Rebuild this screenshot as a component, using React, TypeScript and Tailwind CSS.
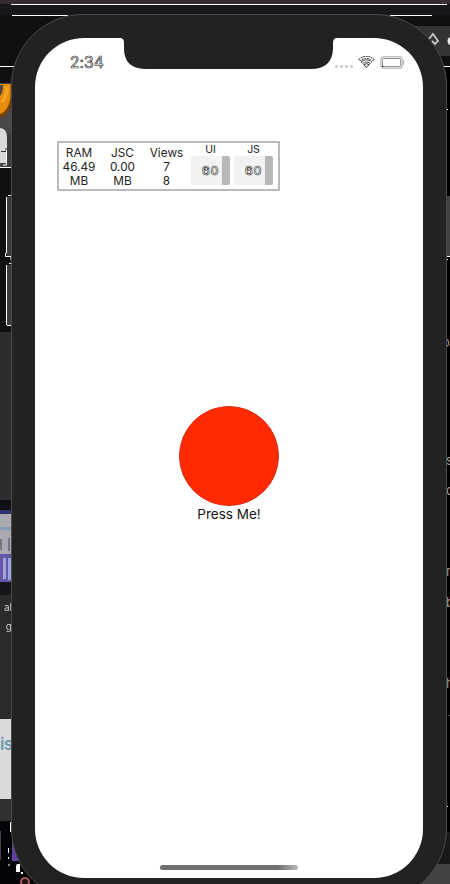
import React from "react";

const stats = [
  { lines: ["RAM", "46.49", "MB"], width: "w-[40px]" },
  { lines: ["JSC", "0.00", "MB"], width: "w-[47px]" },
  { lines: ["Views", "7", "8"], width: "w-[41px]" },
];

// Windows visible along the left edge, stacked from top to bottom.
function LeftStrip() {
  return (
    <div className="flex w-[40px] flex-col">
      <div className="h-px bg-white" />
      <div className="h-[16px]" />
      <svg className="h-[85px] w-[13px]" viewBox="0 0 13 85">
        <path d="M0 0H13V85H0Z" fill="#49474a" />
        <path d="M0 1H12V15Q11 31 0 35Z" fill="#7b3f06" />
        <path d="M0 1H10.500V14Q9 28 0 31Z" fill="#e58c0c" />
        <path d="M0 2H3Q3 10 0 13Z" fill="#4a484a" />
        <path d="M5 4L9 3Q9 14 3 20L0 19Q5 14 5 4Z" fill="#f6a326" />
        <path d="M0 45Q7 45 7 55V80H0Z" fill="#d9d9db" />
        <path d="M1 68.500H6V65" stroke="#333" fill="none" />
        <path d="M0 84.5H12M3 82H6.500V67" stroke="#fff" fill="none" />
      </svg>
      <div className="h-[164px] w-[12px] bg-[#111]" />
      <div className="h-[168px] w-[12px] bg-[#2d2d2f]" />
      <div className="h-[10px] w-[12px] bg-[#101014]" />
      <svg className="h-[72px] w-[12px]" viewBox="0 0 12 72">
        <path d="M0 0H12V4H0Z" fill="#29346c" />
        <path d="M0 4H12V44H0Z" fill="#aaa9af" />
        <path d="M0 17H12V20H0Z" fill="#899bb0" />
        <path d="M0 29H2V40H0ZM8 28H10V41H8Z" fill="#777582" />
        <path d="M0 44H12V72H0Z" fill="#6058a5" />
        <path d="M3 48H6V69H3Z" fill="#aaa0d5" />
        <path d="M8 48H11V70H8Z" fill="#99a5dd" />
      </svg>
      <div className="h-[13px] w-[12px] bg-[#151519]" />
      <div className="flex h-[124px] w-[12px] flex-col items-end bg-[#2a2a2b] pt-[5px] text-[10px] leading-[14px] text-[#ccc]">
        <span className="blur-[0.4px]">al</span>
        <span className="mt-[5px] blur-[0.4px]">g</span>
      </div>
      <div className="h-[80px] w-[14px] bg-[#dadadb] pt-[12px] text-[17px] font-semibold leading-[26px] tracking-[-0.8px] text-[#6b9bad]">is</div>
      <div className="h-[22px] w-[12px] bg-[#303030]" />
      <svg className="h-[63px] w-[40px]" viewBox="0 0 40 63">
        <path d="M0 0H40V63H0Z" fill="#050509" />
        <path d="M0 10H1V39H0Z" fill="#444" />
        <path d="M12 19H20V40H12Z" fill="#6040a6" />
        <path d="M10.500 1V11M8.500 27V32M8.500 36V38M8 44H10" stroke="#fff" />
        <path d="M17 43H20V51H16V45ZM21 51H23V53H21Z" fill="#fff" />
        <circle cx="25" cy="61" r="4" fill="#211" stroke="#a85a5b" strokeWidth="2" />
      </svg>
    </div>
  );
}

// Editor window showing past the right edge of the phone.
function RightStrip() {
  return (
    <div className="flex w-[40px] flex-col">
      <div className="h-px w-[8px] self-end bg-white" />
      <div className="flex h-[765px] justify-end bg-black">
        <div className="flex w-[4px] flex-col overflow-hidden text-[13px] leading-[14px] text-[#9a9a9a]">
          <svg className="h-[268px] w-[4px] shrink-0" viewBox="0 0 4 268">
            <path d="M1 42.500H2M1 189.500H4M1 192.500H2" stroke="#fff" />
          </svg>
          <span className="-ml-[4px]">o</span>
          <span className="mt-[104px]">s</span>
          <span className="mt-[16px]">c</span>
          <span className="mt-[67px]">r</span>
          <span className="mt-[17px]">b</span>
          <span className="mt-[67px]">h</span>
          <svg className="h-[142px] w-[4px] shrink-0" viewBox="0 0 4 142">
            <path d="M3 25.500H4" stroke="#777" />
            <path d="M1 116.500H2" stroke="#fff" />
          </svg>
        </div>
      </div>
      <div className="h-[32px] bg-[#18181a]" />
      <div className="h-[20px] bg-[#424242]" />
    </div>
  );
}

function Desktop() {
  return (
    <div className="absolute inset-0 flex flex-col overflow-hidden bg-[#101013]">
      <div className="h-[4px] bg-[#352c34]" />
      <div className="ml-[11px] mr-[3px] h-px bg-white" />
      <div className="h-[10px] bg-[#17171c]" />
      <div className="flex h-[51px] items-start justify-between">
        <div className="ml-[12px] h-px w-[56px] bg-white" />
        <svg className="h-[51px] w-[60px]" viewBox="0 0 60 51">
          <path d="M0 .5H42" stroke="#fff" />
          <path d="M25 11H60V41H25Z" fill="#343436" />
          <path d="M39 24L43 19L48 26L45 29L42 26" fill="none" stroke="#c5c5c5" strokeWidth="1.800" />
          <circle cx="62" cy="26" r="4.500" fill="#eee" />
        </svg>
      </div>
      <div className="flex flex-1 justify-between">
        <LeftStrip />
        <RightStrip />
      </div>
    </div>
  );
}

function SideButtons() {
  return (
    <div className="absolute inset-0 flex justify-between">
      <svg className="h-[884px] w-[14px]" viewBox="0 0 14 884">
        <path d="M7 133H14V167H7ZM7 197H14V256H7ZM7 265H14V325H7Z" fill="#3c3c3c" />
        <path d="M8 195.500H11M6.500 197V253.500M5.500 253V256.500H11V260M9 263.500H11M6.500 265V325M7 325.500H11" stroke="#fff" fill="none" />
      </svg>
      <div className="mt-[196px] h-[60px] w-[5px] bg-[#424242]" />
    </div>
  );
}

function StatusBar() {
  return (
    <div className="flex h-[48px] items-start justify-between pl-[35px] pr-[17px] pt-[15px]">
      <span className="text-[15.5px] leading-[19px] tracking-[0.1px] text-white [-webkit-text-stroke:0.65px_#222]">2:34</span>
      <div className="flex items-start pt-[3px]">
        <div className="mr-[5px] mt-[9px] flex gap-[2px]">
          {[0, 1, 2, 3].map((i) => (
            <i key={i} className="size-[3px] rounded-full bg-[#c9c9c9]" />
          ))}
        </div>
        <svg width="17" height="12" viewBox="0 0 17 12" fill="none" stroke="#202020" strokeWidth=".95">
          <path d="M.7 3.4Q8.4-2.8 16.2 3.4L14.7 5Q8.4.1 2.2 5Z" strokeDasharray="2 .6" />
          <path d="M3.2 6Q8.4 1.9 13.7 6L12.2 7.5Q8.4 4.5 4.700 7.5Z" strokeDasharray="2 .5" />
          <path d="M5.8 8.6Q8.4 6.8 11.1 8.6L8.4 11.4Z" />
        </svg>
        <svg className="ml-[5px]" width="26" height="13" viewBox="0 0 26 13">
          <rect x=".75" y=".75" width="21.500" height="11.5" rx="3" fill="#fff" stroke="#c1c1c1" strokeWidth="1.4" />
          <rect x="2.5" y="2.5" width="18" height="8" rx="1" fill="#fff" stroke="#777" strokeWidth=".8" />
          <path d="M23.2 4.3Q25 6.5 23.2 8.7Z" fill="#bbb" stroke="#bbb" />
          <path d="M2 10H3V11" stroke="#111" fill="none" />
        </svg>
      </div>
    </div>
  );
}

function FpsGraph({ label }: { label: string }) {
  return (
    <div className="w-[39px] text-center">
      <div className="h-[13px] text-[10.5px] leading-[13px]">{label}</div>
      <div className="flex h-[29px] overflow-hidden rounded-[2px] bg-[#f2f2f2]">
        <div className="flex w-[31px] items-center justify-end pr-[3px] text-[12px] font-semibold tracking-[0.7px] text-white [-webkit-text-stroke:0.6px_#1b1b1b]">60</div>
        <div className="w-[8px] bg-[#b7b7b7]" />
      </div>
    </div>
  );
}

function PerfMonitor() {
  return (
    <div className="ml-[22px] mt-[55px] flex h-[50px] w-[223px] border-2 border-[#bbb] pt-px text-[#242424]">
      {stats.map((s) => (
        <div key={s.lines[0]} className={`${s.width} pt-[2px] text-center text-[11.8px] leading-[14px]`}>
          {s.lines.map((line) => (
            <div key={line}>{line}</div>
          ))}
        </div>
      ))}
      <div className="-mt-px ml-[4px] flex gap-[4px]">
        <FpsGraph label="UI" />
        <FpsGraph label="JS" />
      </div>
    </div>
  );
}

export default function App() {
  return (
    <div className="relative h-[884px] w-[450px] overflow-hidden font-['Inter','Liberation_Sans',sans-serif]">
      <Desktop />
      <SideButtons />
      <div className="relative ml-[11px] mt-[14px] h-[887px] w-[436px] rounded-[72px] border border-[#4b4b4d] bg-[#222] px-[23px] pt-[23px]">
        <main className="flex h-[840px] w-[388px] flex-col rounded-[49px] bg-white">
          <StatusBar />
          <PerfMonitor />
          <div className="mt-[215px] flex flex-col items-center">
            <button aria-label="Press Me" className="size-[100px] rounded-full border border-[#d83015] bg-[#ff2a00]" />
            <span className="text-[13.5px] leading-[17px] text-[#171717]">Press Me!</span>
          </div>
          <div className="mb-[8px] mt-auto h-[5px] w-[138px] self-center rounded-full bg-linear-to-r from-[#707070] from-85% to-[#b9b9b9]" />
        </main>
        {/* Sensor housing */}
        <svg className="absolute left-[107px] top-[22px]" width="220" height="33" viewBox="0 0 220 33">
          <path d="M0 0H220V1H218Q214 1 214 6V12Q213 32 192 32H26Q5 31 5 12V6Q5 1 1 1H0Z" fill="#222" />
        </svg>
      </div>
    </div>
  );
}
